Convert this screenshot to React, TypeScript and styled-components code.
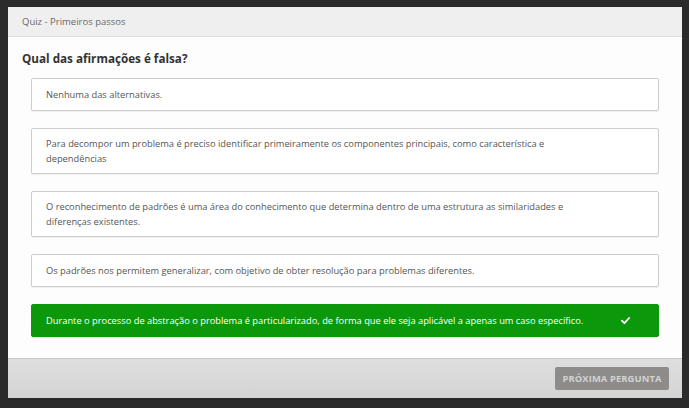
import React from "react";
import styled, { createGlobalStyle } from "styled-components";

const Global = createGlobalStyle`
  html, body { margin: 0; padding: 0; height: 100%; background: #2b2b2b; }
  #root { height: 100%; }
  * { box-sizing: border-box; }
`;

const Page = styled.div`
  height: 100vh;
  padding: 7px 7px 10px 8px;
  display: flex;
  font-family: "Open Sans", "Noto Sans", sans-serif;
`;

const Window = styled.div`
  flex: 1;
  display: flex;
  flex-direction: column;
  background: #fdfdfd;
`;

const Header = styled.div`
  height: 30px;
  display: flex;
  align-items: center;
  padding-left: 14px;
  background: #efefef;
  border-bottom: 1px solid #dcdcdc;
  font-size: 9.5px;
  color: #6a6a6a;
`;

const Body = styled.div`
  flex: 1;
  padding: 12px 23px 0 14px;
  display: flex;
  flex-direction: column;
`;

const Title = styled.h1`
  margin: 0 0 11px 0;
  font-size: 11.7px;
  line-height: 18px;
  font-weight: 700;
  color: #333;
`;

const Options = styled.div`
  display: flex;
  flex-direction: column;
  gap: 17px;
  padding-left: 9px;
`;

const Option = styled.div<{ $correct?: boolean }>`
  display: flex;
  align-items: center;
  justify-content: space-between;
  min-height: 33px;
  padding: 7px 14px;
  font-size: 9.3px;
  line-height: 15px;
  border-radius: 2px;
  border: 1px solid ${(p) => (p.$correct ? "#0b990b" : "#cdcdcd")};
  background: ${(p) => (p.$correct ? "#0b990b" : "#fff")};
  color: ${(p) => (p.$correct ? "#fff" : "#555")};
  box-shadow: 0 1px 1px rgba(0, 0, 0, 0.06);
`;

const OptionText = styled.span`
  flex: 1;
  max-width: 555px;
`;

const Check = styled.svg`
  width: 9px;
  height: 9px;
  margin-right: 14px;
  flex: none;
`;

const Footer = styled.div`
  height: 40px;
  display: flex;
  align-items: center;
  justify-content: flex-end;
  padding-right: 13px;
  border-top: 1px solid #c8c8c8;
  background: linear-gradient(#dedede, #d4d4d4);
`;

const NextButton = styled.button`
  width: 114px;
  height: 23px;
  border: none;
  border-radius: 2px;
  background: #8d8c8a;
  color: #d2d2d2;
  font-family: "Open Sans", "Noto Sans", sans-serif;
  font-weight: 700;
  font-size: 9.4px;
  letter-spacing: 0.1px;
  padding: 0;
`;

const options = [
  "Nenhuma das alternativas.",
  "Para decompor um problema é preciso identificar primeiramente os componentes principais, como característica e dependências",
  "O reconhecimento de padrões é uma área do conhecimento que determina dentro de uma estrutura as similaridades e diferenças existentes.",
  "Os padrões nos permitem generalizar, com objetivo de obter resolução para problemas diferentes.",
];

export default function App() {
  return (
    <>
      <Global />
      <Page>
        <Window>
          <Header>Quiz - Primeiros passos</Header>
          <Body>
            <Title>Qual das afirmações é falsa?</Title>
            <Options>
              {options.map((o) => (
                <Option key={o}>
                  <OptionText>{o}</OptionText>
                </Option>
              ))}
              <Option $correct>
                <OptionText>
                  Durante o processo de abstração o problema é particularizado, de forma que ele seja aplicável a apenas um caso específico.
                </OptionText>
                <Check viewBox="0 0 10 10">
                  <path d="M1 5.2 L3.8 8 L9 2.2" fill="none" stroke="#fff" strokeWidth="2" strokeLinecap="round" strokeLinejoin="round" />
                </Check>
              </Option>
            </Options>
          </Body>
          <Footer>
            <NextButton>PRÓXIMA PERGUNTA</NextButton>
          </Footer>
        </Window>
      </Page>
    </>
  );
}
